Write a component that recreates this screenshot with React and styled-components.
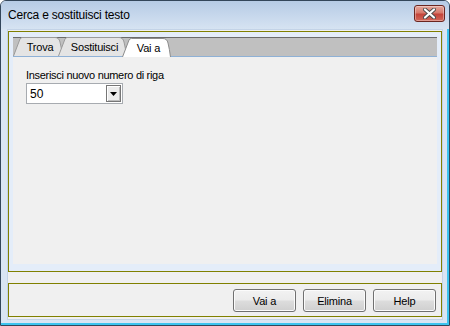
import React from 'react';
import styled, { createGlobalStyle } from 'styled-components';

const GlobalStyle = createGlobalStyle`
  html, body {
    margin: 0;
    padding: 0;
    background: #ffffff;
  }
  body {
    font-family: "Liberation Sans", Arial, sans-serif;
  }
`;

const Window = styled.div`
  width: 450px;
  height: 326px;
  box-sizing: border-box;
  border: 1px solid #33465a;
  border-radius: 6px 6px 0 0;
  background: #d9e5f3;
  box-shadow: inset -2px -2px 0 #3cc4ef;
  display: flex;
  flex-direction: column;
  overflow: hidden;
`;

const TitleBar = styled.div`
  height: 28px;
  flex-shrink: 0;
  display: flex;
  align-items: flex-start;
  justify-content: space-between;
  padding-left: 7px;
  background: linear-gradient(#b6cbe5, #d6e3f2);
`;

const Title = styled.span`
  font-size: 12px;
  letter-spacing: -0.2px;
  color: #000;
  line-height: 14px;
  margin-top: 7px;
`;

const CloseButton = styled.div`
  width: 29px;
  height: 15px;
  margin: 4px 4px 0 0;
  border: 1px solid #6b2620;
  border-radius: 3px;
  background: linear-gradient(#e5a79c 0%, #d77a6c 45%, #c4443a 55%, #d2685a 100%);
  box-shadow: inset 0 0 0 1px rgba(255, 255, 255, 0.35);
  display: flex;
  align-items: center;
  justify-content: center;
`;

const Client = styled.div`
  flex: 1;
  margin: 0 6px 5px 6px;
  border: 1px solid #c3d3e7;
  background: #f0f0f0;
  padding: 1px 0 2px 0;
  display: flex;
  flex-direction: column;
  gap: 11px;
`;

const GroupBox = styled.div`
  box-sizing: border-box;
  height: ${props => props.$h}px;
  border: 1px solid #808000;
  background: ${props => props.$tinted ? '#e4edf9' : '#f0f0f0'};
`;

const TabArea = styled(GroupBox)`
  padding: 5px 4px 7px 4px;
  display: flex;
  flex-direction: column;
`;

const TabStrip = styled.div`
  height: 20px;
  box-sizing: border-box;
  border-top: 1px solid #6b6b6b;
  border-bottom: 1px solid #8fb1d6;
  background: #c0c0c0;
  display: flex;
  align-items: flex-end;
`;

const Tab = styled.div`
  position: relative;
  width: ${props => props.$w}px;
  height: 19px;
  margin-left: ${props => props.$first ? 0 : -5}px;
  margin-bottom: ${props => props.$active ? -1 : 0}px;
  z-index: ${props => props.$active ? 5 : props.$z};
  display: flex;
  align-items: center;
  justify-content: center;
  padding-left: 4px;
  box-sizing: border-box;
  font-size: 11px;
  letter-spacing: -0.2px;
  color: #000;
`;

const TabShape = styled.svg`
  position: absolute;
  left: 0;
  top: 0;
`;

const TabLabel = styled.span`
  position: relative;
  margin-top: 1px;
`;

const Panel = styled.div`
  flex: 1;
  background: #f0f0f0;
  padding: 12px 13px;
`;

const FieldLabel = styled.div`
  font-size: 11px;
  letter-spacing: -0.3px;
  line-height: 13px;
  color: #000;
`;

const Combo = styled.div`
  margin-top: 1px;
  width: 97px;
  height: 21px;
  box-sizing: border-box;
  border: 1px solid #a7abb0;
  background: #ffffff;
  display: flex;
  align-items: center;
  justify-content: space-between;
  padding: 0 1px 0 3px;
  font-size: 12px;
`;

const DropButton = styled.div`
  width: 15px;
  height: 17px;
  box-sizing: border-box;
  border: 1px solid #767676;
  box-shadow: inset 1px 1px 0 #ffffff, inset -1px -1px 0 #bdbdbd;
  background: #ececec;
  display: flex;
  align-items: center;
  justify-content: center;
`;

const ButtonBar = styled(GroupBox)`
  display: flex;
  justify-content: flex-end;
  align-items: flex-start;
  gap: 7px;
  padding: 5px 5px 0 0;
`;

const Button = styled.div`
  width: 63px;
  height: 23px;
  box-sizing: border-box;
  border: 1px solid #707070;
  border-radius: 3px;
  background: linear-gradient(#f2f2f2 0%, #ebebeb 48%, #dddddd 52%, #cfcfcf 100%);
  box-shadow: inset 0 0 0 1px #fbfbfb;
  display: flex;
  align-items: center;
  justify-content: center;
  font-size: 11px;
  letter-spacing: -0.2px;
  color: #000;
`;

const tabs = [
  { label: 'Trova', w: 50 },
  { label: 'Sostituisci', w: 69 },
  { label: 'Vai a', w: 49, active: true },
];

const tabPath = w =>
  `M0.5 19 L7 2 Q7.6 0.5 9.5 0.5 L${w - 8} 0.5 Q${w - 4} 0.5 ${w - 3} 5 Q${w - 1.5} 11 ${w - 0.5} 19`;

const App = () => (
  <>
    <GlobalStyle />
    <Window>
      <TitleBar>
        <Title>Cerca e sostituisci testo</Title>
        <CloseButton>
          <svg width="13" height="11" viewBox="0 0 13 11">
            <path d="M2 1.5 L11 9.5 M11 1.5 L2 9.5" stroke="#4a4a4a" strokeWidth="4" strokeLinecap="round" />
            <path d="M2 1.5 L11 9.5 M11 1.5 L2 9.5" stroke="#ffffff" strokeWidth="2.2" strokeLinecap="round" />
          </svg>
        </CloseButton>
      </TitleBar>
      <Client>
        <TabArea $h={241} $tinted>
          <TabStrip>
            {tabs.map((t, i) => (
              <Tab key={t.label} $w={t.w} $first={i === 0} $active={t.active} $z={i + 1}>
                <TabShape width={t.w} height={20}>
                  <path
                    d={tabPath(t.w)}
                    fill={t.active ? '#ffffff' : '#e4e4e4'}
                    stroke={t.active ? '#8c8c8c' : '#9a9a9a'}
                    strokeWidth="1"
                  />
                </TabShape>
                <TabLabel>{t.label}</TabLabel>
              </Tab>
            ))}
          </TabStrip>
          <Panel>
            <FieldLabel>Inserisci nuovo numero di riga</FieldLabel>
            <Combo>
              <span>50</span>
              <DropButton>
                <svg width="7" height="4" viewBox="0 0 7 4">
                  <path d="M0 0 H7 L3.5 4 Z" fill="#000" />
                </svg>
              </DropButton>
            </Combo>
          </Panel>
        </TabArea>
        <ButtonBar $h={34}>
          <Button>Vai a</Button>
          <Button>Elimina</Button>
          <Button>Help</Button>
        </ButtonBar>
      </Client>
    </Window>
  </>
);

export default App;
